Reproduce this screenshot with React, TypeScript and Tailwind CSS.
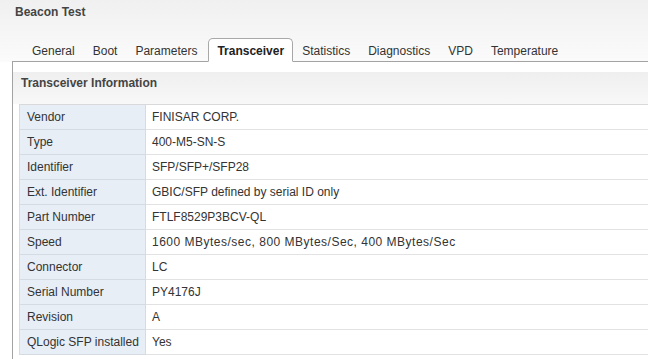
import React from "react";

const tabs = ["General", "Boot", "Parameters", "Transceiver", "Statistics", "Diagnostics", "VPD", "Temperature"];

const rows: [string, string][] = [
  ["Vendor", "FINISAR CORP."],
  ["Type", "400-M5-SN-S"],
  ["Identifier", "SFP/SFP+/SFP28"],
  ["Ext. Identifier", "GBIC/SFP defined by serial ID only"],
  ["Part Number", "FTLF8529P3BCV-QL"],
  ["Speed", "1600 MBytes/sec, 800 MBytes/Sec, 400 MBytes/Sec"],
  ["Connector", "LC"],
  ["Serial Number", "PY4176J"],
  ["Revision", "A"],
  ["QLogic SFP installed", "Yes"],
];

export default function App() {
  return (
    <div
      className="w-[648px] h-[359px] overflow-hidden bg-white text-[12px] text-[#333]"
      style={{ fontFamily: '"Liberation Sans", Arial, sans-serif' }}
    >
      <div className="bg-gradient-to-b from-[#f0f0f0] to-[#fbfbfb]">
        <div className="h-[38px] pl-[15px] pt-[5px] font-bold leading-[14px] text-[#444]">Beacon Test</div>
        <div className="pl-[12px]">
          <div className="flex h-[24px] border-b border-[#a3a3a3] pl-[11px]">
            {tabs.map((t) =>
              t === "Transceiver" ? (
                <div
                  key={t}
                  className="-mb-px ml-[2px] flex h-[24px] items-center rounded-t-[5px] border border-b-white border-[#a8a8a8] bg-white px-[8px] pt-[1px] font-bold text-[#222]"
                >
                  {t}
                </div>
              ) : (
                <div key={t} className="-mb-px flex h-[24px] items-center border border-transparent px-[8px] pt-[1px] text-[#333]">
                  {t}
                </div>
              )
            )}
          </div>
        </div>
      </div>
      <div className="ml-[12px] h-[300px] border-l border-[#a3a3a3] bg-white">
        <div className="h-[10px]" />
        <div className="h-[32px] bg-gradient-to-b from-[#efefef] to-[#f8f8f8] pl-[8px] pt-[4px] font-bold leading-[14px] text-[#444]">
          Transceiver Information
        </div>
        <div className="ml-[6px] border-t border-[#d9d9d9]">
          {rows.map(([k, v]) => (
            <div key={k} className="flex h-[25px]">
              <div className="flex w-[127px] shrink-0 items-center border-b border-l border-r border-[#d4dbe3] bg-[#e7eef6] pl-[7px] leading-[14px]">
                {k}
              </div>
              <div
                className={
                  k === "Speed"
                    ? "flex flex-1 items-center border-b border-[#e2e2e2] bg-white pl-[6px] leading-[14px] tracking-[0.5px]"
                    : "flex flex-1 items-center border-b border-[#e2e2e2] bg-white pl-[6px] leading-[14px]"
                }
              >
                {v}
              </div>
            </div>
          ))}
        </div>
      </div>
    </div>
  );
}
